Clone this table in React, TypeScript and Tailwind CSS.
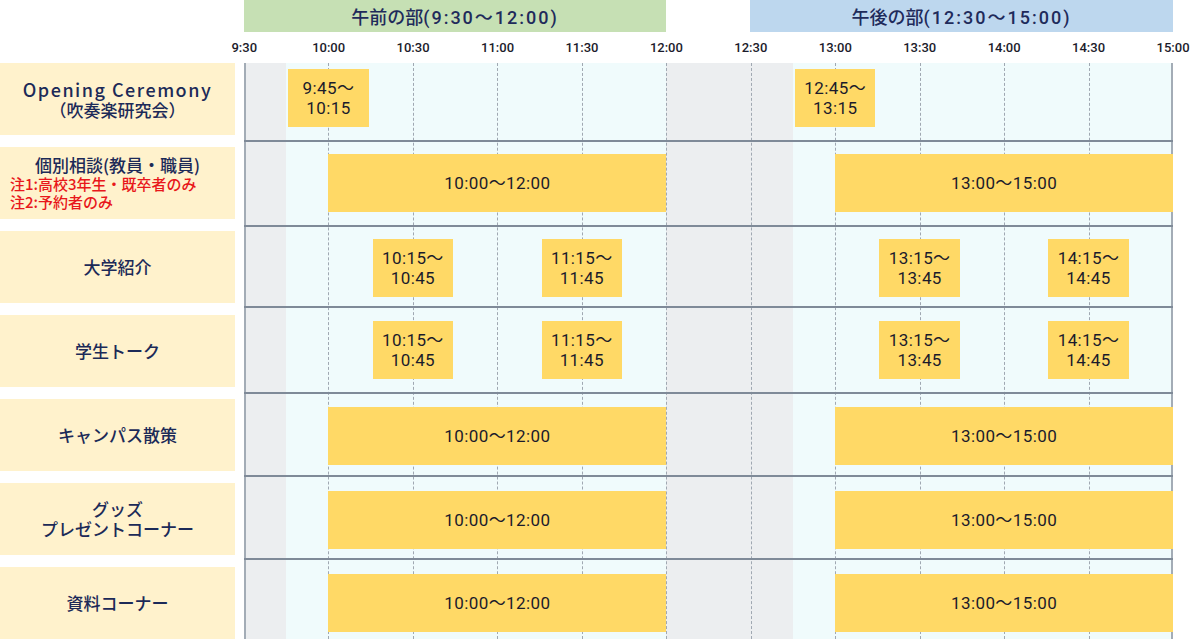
import clsx from "clsx";
import { Fragment } from "react";

const cn = clsx;

type Block = { pos: string; lines: string[]; short?: boolean };

interface Row {
  h: string;
  pt: string;
  top?: boolean;
  blocks: Block[];
}

// CJK face for labels, a wider Latin face in front for the times
const JP = "font-['Noto_Sans_CJK_JP','Noto_Sans',sans-serif]";
const NUM = "font-['Roboto','Noto_Sans_CJK_JP',sans-serif]";

const am = { pos: "col-start-3 col-span-8", lines: ["10:00〜12:00"] };
const pm = { pos: "col-start-15 col-span-8", lines: ["13:00〜15:00"] };
const talks: Block[] = [
  { pos: "col-start-4 col-span-2", lines: ["10:15〜", "10:45"], short: true },
  { pos: "col-start-8 col-span-2", lines: ["11:15〜", "11:45"], short: true },
  { pos: "col-start-16 col-span-2", lines: ["13:15〜", "13:45"], short: true },
  { pos: "col-start-20 col-span-2", lines: ["14:15〜", "14:45"], short: true },
];

const rows: Row[] = [
  {
    h: "h-[77px]",
    pt: "pt-[6px]",
    top: true,
    blocks: [
      { pos: "col-start-2 col-span-2", lines: ["9:45〜", "10:15"], short: true },
      { pos: "col-start-14 col-span-2", lines: ["12:45〜", "13:15"], short: true },
    ],
  },
  { h: "h-[85px]", pt: "pt-[12px]", blocks: [am, pm] },
  { h: "h-[81px]", pt: "pt-[12px]", blocks: talks },
  { h: "h-[86px]", pt: "pt-[13px]", blocks: talks },
  { h: "h-[83px]", pt: "pt-[13px]", blocks: [am, pm] },
  { h: "h-[83px]", pt: "pt-[14px]", blocks: [am, pm] },
  { h: "h-[79px]", pt: "pt-[14px]", blocks: [am, pm] },
];

const ticks = [
  "9:30", "10:00", "10:30", "11:00", "11:30", "12:00",
  "12:30", "13:00", "13:30", "14:00", "14:30", "15:00",
];

function Lines({ lines }: { lines: string[] }) {
  return (
    <span>
      {lines.map((l, i) => (
        <Fragment key={l}>
          {i > 0 && <br />}
          {l}
        </Fragment>
      ))}
    </span>
  );
}

function Label({ lines, children }: { lines?: string[]; children?: React.ReactNode }) {
  return (
    <div className="flex h-[72px] flex-col items-center justify-center bg-[#fff2cc] text-center text-[17px] font-medium leading-[20px] text-[#1c2a58]">
      {lines ? <Lines lines={lines} /> : children}
    </div>
  );
}

export default function App() {
  return (
    <div className={cn("h-[639px] w-[1200px] overflow-hidden bg-white", JP)}>
      {/* Session headers */}
      <div className={cn("flex h-[32px] text-[18px] font-medium text-[#1f2b5b]", NUM)}>
        <div className="w-[244px]" />
        <div className="flex w-[422px] items-center justify-center bg-[#c6e0b4] pt-[2px]">
          午前の部<span className="tracking-[2px]">(9:30〜12:00)</span>
        </div>
        <div className="w-[84px]" />
        <div className="flex w-[423px] items-center justify-center bg-[#bdd7ee] pt-[2px]">
          午後の部<span className="tracking-[2px]">(12:30〜15:00)</span>
        </div>
      </div>

      {/* Time axis */}
      <div
        className={cn(
          "ml-[202px] grid h-[31px] grid-cols-[repeat(12,84.45px)] items-center text-center text-[13px] font-medium text-[#1b1b2b]",
          NUM
        )}
      >
        {ticks.map((t) => (
          <span key={t}>{t}</span>
        ))}
      </div>

      <div className="flex">
        {/* Row labels */}
        <div className="flex w-[235px] flex-col gap-[12px]">
          <Label>
            <span>
              <span className="text-[18px] tracking-[1.5px]">Opening Ceremony</span>
              <br />
              （吹奏楽研究会）
            </span>
          </Label>
          <div className="flex h-[72px] flex-col justify-center bg-[#fff2cc] px-[10px]">
            <span className="text-center text-[17px] font-medium leading-[20px] text-[#1c2a58]">
              個別相談(教員・職員)
            </span>
            <span className="text-[15px] font-medium leading-[18px] text-[#e8171b]">
              注1:高校3年生・既卒者のみ
              <br />
              注2:予約者のみ
            </span>
          </div>
          <Label lines={["大学紹介"]} />
          <Label lines={["学生トーク"]} />
          <Label lines={["キャンパス散策"]} />
          <Label lines={["グッズ", "プレゼントコーナー"]} />
          <Label lines={["資料コーナー"]} />
        </div>

        {/* Timeline grid */}
        <div className="relative ml-[9px] w-[929px]">
          <div className="absolute inset-0 grid grid-cols-[repeat(22,minmax(0,1fr))]">
            {Array.from({ length: 22 }, (_, k) => {
              const i = k + 1;
              const gray = i === 1 || (i >= 11 && i <= 13);
              const dashed = i % 2 === 1 && i >= 3;
              return (
                <div
                  key={i}
                  className={cn(
                    gray ? "bg-[#eceef0]" : "bg-[#f0fbfc]",
                    dashed && "border-l border-dashed border-[#a0a8b2]",
                    i === 1 && "border-l-2 border-[#a3acb6]",
                    i === 22 && "border-r-2 border-[#a3acb6]"
                  )}
                />
              );
            })}
          </div>

          <div className="relative">
            {rows.map((row, r) => (
              <div
                key={r}
                className={cn(
                  "grid grid-cols-[repeat(22,minmax(0,1fr))] items-start",
                  row.h,
                  row.pt,
                  !row.top && "border-t-2 border-[#7f8a98]"
                )}
              >
                {row.blocks.map((b) => (
                  <div
                    key={b.pos}
                    className={cn(
                      "row-start-1 flex h-[58px] items-center justify-center bg-[#ffd966] text-center text-[17px] leading-[20px] tracking-[0.4px] text-[#1b1b2b]",
                      NUM,
                      b.pos,
                      b.short && "mx-[2px]"
                    )}
                  >
                    <Lines lines={b.lines} />
                  </div>
                ))}
              </div>
            ))}
          </div>
        </div>
      </div>
    </div>
  );
}
